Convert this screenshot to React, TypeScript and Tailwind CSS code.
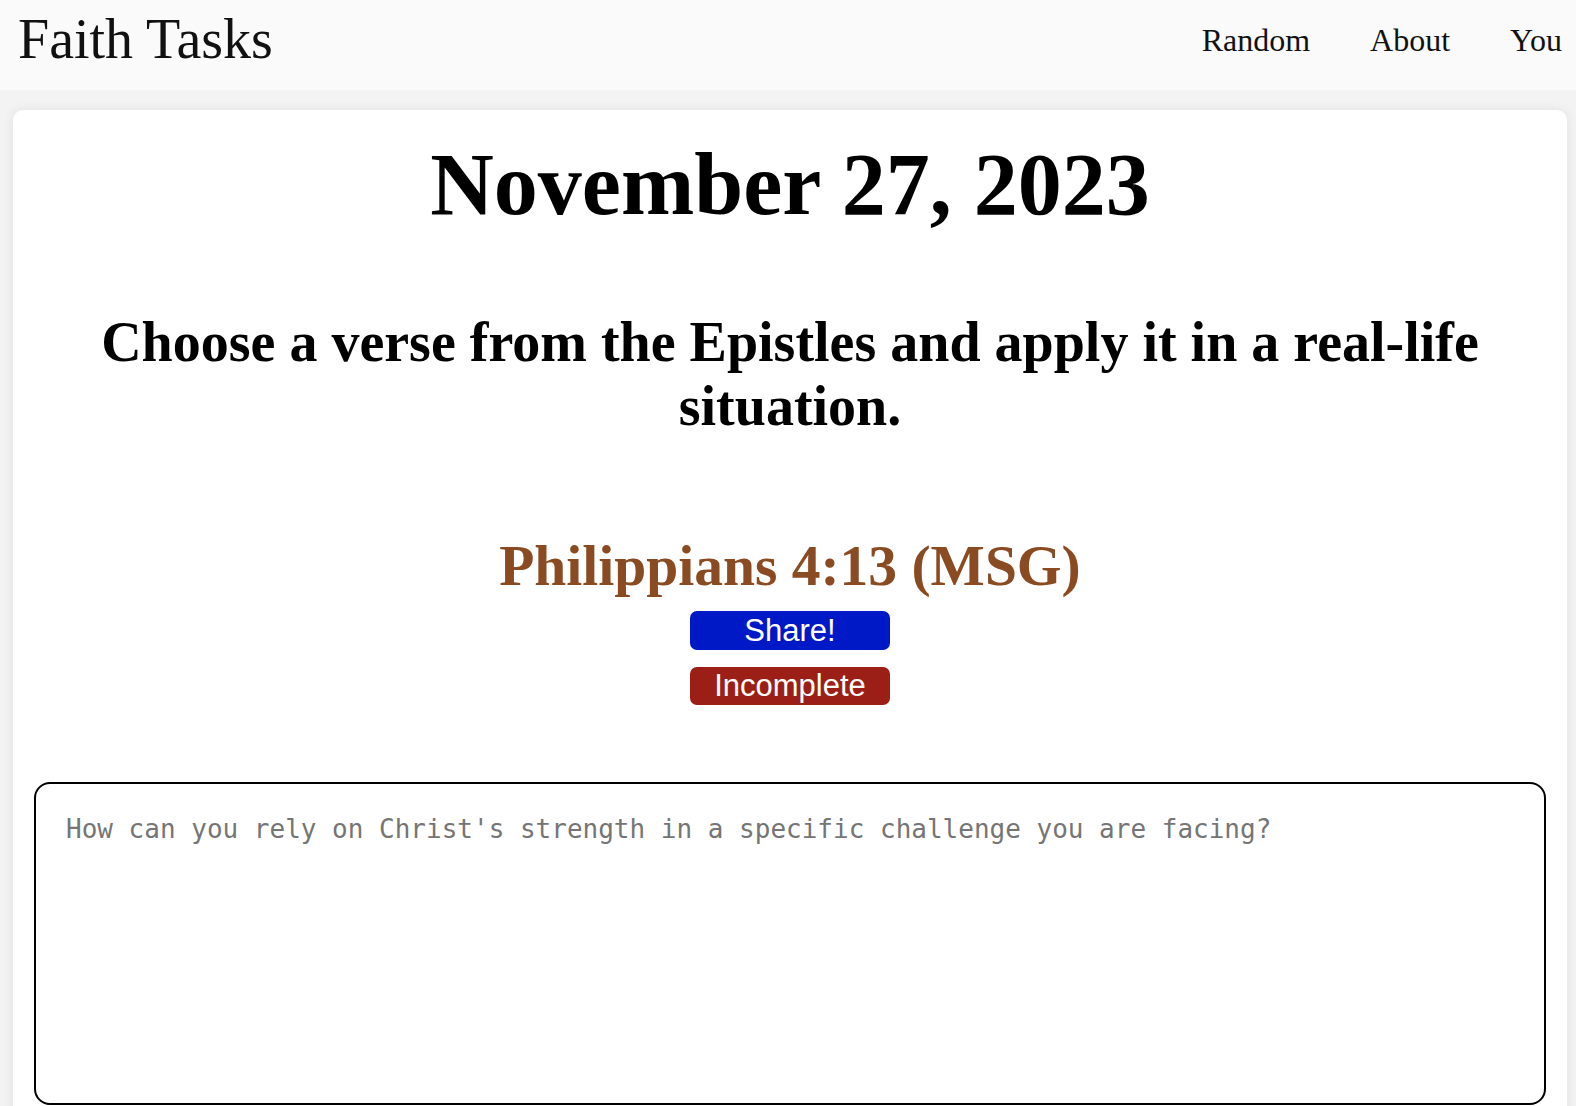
const serif = "font-['Liberation_Serif','Times_New_Roman',serif]";

function Header() {
  return (
    <header className="flex h-[90px] items-start justify-between bg-[#fafafa] pl-[18px] pr-[14px]">
      <a href="#" className={`${serif} pt-[7px] text-[56px] leading-[64px] text-[#111]`}>
        Faith Tasks
      </a>
      <nav className={`${serif} flex gap-[60px] pt-[22px] text-[32px] leading-[37px] text-[#111]`}>
        <a href="#">Random</a>
        <a href="#">About</a>
        <a href="#">You</a>
      </nav>
    </header>
  );
}

export default function App() {
  return (
    <div className="min-h-screen bg-[#f3f3f3]">
      <Header />
      <main className="ml-[13px] mr-[9px] mt-[20px] rounded-[10px] bg-white px-[21px] pb-[40px] pt-[24px] shadow-[0_0_12px_rgba(0,0,0,0.08)]">
        <h1 className={`${serif} text-center text-[88px] font-bold leading-[101px] text-black`}>
          November 27, 2023
        </h1>
        <h2 className={`${serif} mx-auto mt-[75px] max-w-[1420px] text-center text-[56px] font-bold leading-[64.4px] text-black`}>
          Choose a verse from the Epistles and apply it in a real-life situation.
        </h2>
        <h3 className={`${serif} mt-[94px] text-center text-[57.5px] font-bold leading-[66px] text-[#8a4b23]`}>
          Philippians 4:13 (MSG)
        </h3>
        <div className="mt-[12px] flex flex-col items-center gap-[17px] font-['Liberation_Sans',Arial,sans-serif]">
          <button
            type="button"
            className="h-[39px] w-[200px] rounded-[7px] bg-[#0019c6] text-[31px] leading-none text-white"
          >
            Share!
          </button>
          <button
            type="button"
            className="h-[38px] w-[200px] rounded-[7px] bg-[#9c1f17] text-[31px] leading-none text-white"
          >
            Incomplete
          </button>
        </div>
        <textarea
          placeholder="How can you rely on Christ's strength in a specific challenge you are facing?"
          className="mt-[77px] block h-[323px] w-full resize-none rounded-[16px] border-2 border-black bg-white px-[30px] pt-[26px] font-['DejaVu_Sans_Mono',monospace] text-[26px] text-black outline-none placeholder:text-[#757575]"
        />
      </main>
    </div>
  );
}
